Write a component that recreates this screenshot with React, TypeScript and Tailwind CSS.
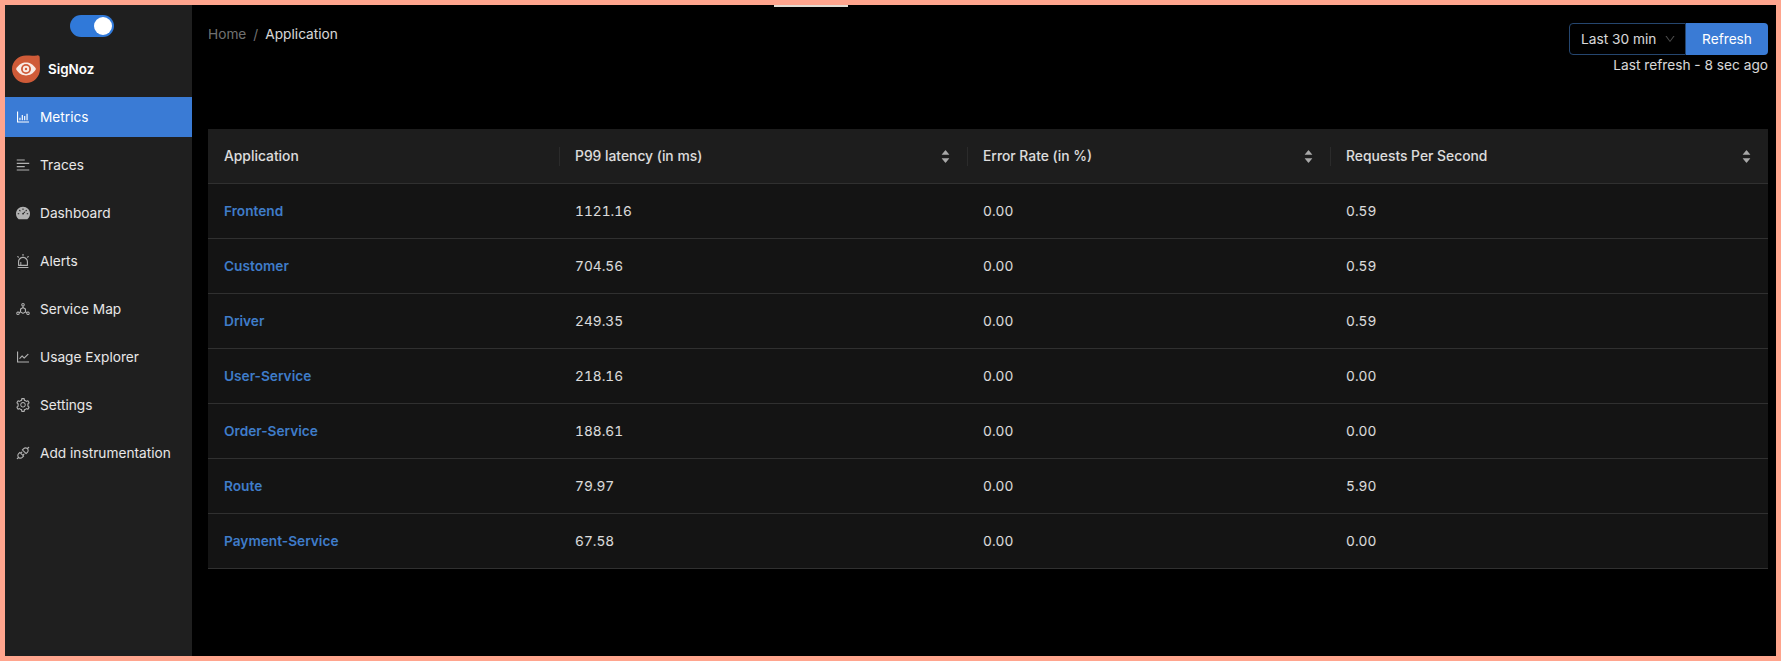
import React from 'react';
import {
  AiOutlineBarChart,
  AiOutlineAlignLeft,
  AiFillDashboard,
  AiOutlineAlert,
  AiOutlineDeploymentUnit,
  AiOutlineLineChart,
  AiOutlineSetting,
  AiOutlineApi,
  AiFillCaretUp,
  AiFillCaretDown,
  AiOutlineDown,
} from 'react-icons/ai';

const navItems = [
  { label: 'Metrics', icon: AiOutlineBarChart, active: true },
  { label: 'Traces', icon: AiOutlineAlignLeft },
  { label: 'Dashboard', icon: AiFillDashboard },
  { label: 'Alerts', icon: AiOutlineAlert },
  { label: 'Service Map', icon: AiOutlineDeploymentUnit },
  { label: 'Usage Explorer', icon: AiOutlineLineChart },
  { label: 'Settings', icon: AiOutlineSetting },
  { label: 'Add instrumentation', icon: AiOutlineApi },
];

const services = [
  { name: 'Frontend', p99: '1121.16', error: '0.00', rps: '0.59' },
  { name: 'Customer', p99: '704.56', error: '0.00', rps: '0.59' },
  { name: 'Driver', p99: '249.35', error: '0.00', rps: '0.59' },
  { name: 'User-Service', p99: '218.16', error: '0.00', rps: '0.00' },
  { name: 'Order-Service', p99: '188.61', error: '0.00', rps: '0.00' },
  { name: 'Route', p99: '79.97', error: '0.00', rps: '5.90' },
  { name: 'Payment-Service', p99: '67.58', error: '0.00', rps: '0.00' },
];

const Logo = () => (
  <svg width="28" height="28" viewBox="0 0 28 28" className="shrink-0">
    <path d="M14 0.6 C18 0.6 21 1 25 0.4 C26.6 0.2 27.7 1 27.7 2.6 C27.7 6 28 10 28 14 C28 21.8 21.8 28 14 28 C6.2 28 0 21.8 0 14 C0 6.8 6.2 0.6 14 0.6 Z" fill="#cf5b38" />
    <path d="M4 14 C6.8 9.2 10.4 7.6 14 7.6 C17.6 7.6 21.2 9.2 24 14 C21.2 18.8 17.6 20.4 14 20.4 C10.4 20.4 6.8 18.8 4 14 Z" fill="#f8ece6" />
    <circle cx="14" cy="14" r="5" fill="#cf5b38" />
    <circle cx="14" cy="14" r="3.2" fill="#f8ece6" />
    <circle cx="14" cy="14" r="1.2" fill="#cf5b38" />
  </svg>
);

const SortHeader = ({ label }: { label: string }) => (
  <th className="relative px-4 pt-[2px] text-left text-[13.85px] font-medium text-white/85">
    <span className="absolute left-0 top-[18px] h-[19px] w-px bg-[#2b2b2b]" />
    <div className="flex items-center justify-between">
      <span>{label}</span>
      <span className="flex flex-col items-center text-[11px] leading-none text-[#a8a8a8]">
        <AiFillCaretUp className="-mb-[3px]" />
        <AiFillCaretDown />
      </span>
    </div>
  </th>
);

export default function App() {
  return (
    <div
      className="relative flex h-[661px] w-[1781px] overflow-hidden border-[5px] border-[#ffa58e] bg-black text-[13.7px] text-white/85"
      style={{ fontFamily: 'Inter, "Liberation Sans", sans-serif' }}
    >
      <span className="absolute left-[769px] top-0 h-[2px] w-[74px] bg-[#e3dcd3]" />

      <aside className="flex w-[187px] shrink-0 flex-col bg-[#1f1f1f]">
        <div className="flex pl-[65px] pt-[10px]">
          <div className="flex h-[22px] w-[44px] items-center justify-end rounded-full bg-[#3079d9] pr-[2px]">
            <span className="h-[18px] w-[18px] rounded-full bg-white" />
          </div>
        </div>
        <div className="mt-[18px] flex h-[28px] items-center gap-2 pl-[7px]">
          <Logo />
          <span className="text-[13.4px] font-semibold text-white">SigNoz</span>
        </div>
        <nav className="mt-[14px] flex flex-col gap-2">
          {navItems.map(({ label, icon: Icon, active }) => (
            <div
              key={label}
              className={`flex h-[40px] items-center gap-[9px] pl-[10px] ${
                active ? 'bg-[#3a7bd5] text-white' : 'text-white/90'
              }`}
            >
              <Icon className={`text-[16px] ${active ? 'text-white' : 'text-white/65'}`} />
              <span>{label}</span>
            </div>
          ))}
        </nav>
      </aside>

      <main className="flex min-w-0 flex-1 flex-col pl-4 pr-2">
        <header className="flex h-[124px] items-start justify-between">
          <div className="flex gap-[7px] pt-[19px]">
            <span className="text-white/45">Home</span>
            <span className="text-white/45">/</span>
            <span className="text-white/85">Application</span>
          </div>
          <div className="flex flex-col items-end pt-[18px]">
            <div className="flex">
              <div className="flex h-[32px] w-[117px] items-center justify-between rounded-l-sm border border-[#25466f] pl-[11px] pr-[9px]">
                <span>Last 30 min</span>
                <AiOutlineDown className="text-[12px] text-white/30" />
              </div>
              <button className="h-[32px] w-[82px] rounded-r-sm bg-[#3a7bd5] text-white">Refresh</button>
            </div>
            <span className="leading-[21px]">Last refresh - 8 sec ago</span>
          </div>
        </header>

        <table className="w-[1560px] table-fixed border-collapse">
          <colgroup>
            <col className="w-[351px]" />
            <col className="w-[408px]" />
            <col className="w-[363px]" />
            <col />
          </colgroup>
          <thead>
            <tr className="h-[54px] border-b border-[#303030] bg-[#1d1d1d]">
              <th className="px-4 pt-[2px] text-left text-[13.85px] font-medium text-white/85">Application</th>
              <SortHeader label="P99 latency (in ms)" />
              <SortHeader label="Error Rate (in %)" />
              <SortHeader label="Requests Per Second" />
            </tr>
          </thead>
          <tbody>
            {services.map((s) => (
              <tr key={s.name} className="h-[55px] border-b border-[#303030] bg-[#141414]">
                <td className="px-4 pt-[2px] font-semibold text-[#3f7cc9]">{s.name}</td>
                <td className="px-4 pt-[2px] tabular-nums">{s.p99}</td>
                <td className="px-4 pt-[2px] tabular-nums">{s.error}</td>
                <td className="px-4 pt-[2px] tabular-nums">{s.rps}</td>
              </tr>
            ))}
          </tbody>
        </table>
      </main>
    </div>
  );
}
